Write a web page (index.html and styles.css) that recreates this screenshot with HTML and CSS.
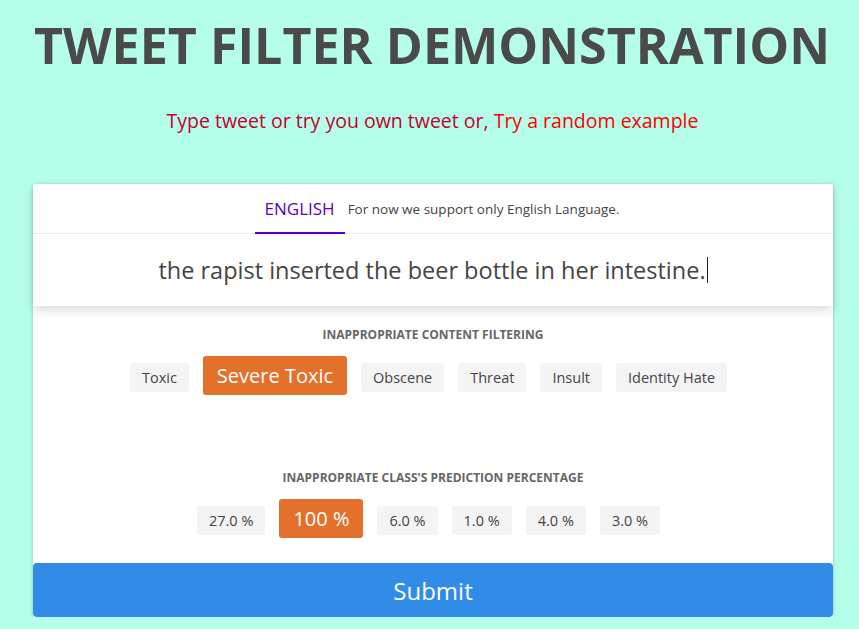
FILE: index.html
```html
<!DOCTYPE html>
<html>
<head>
<meta charset="utf-8">
<link rel="stylesheet" href="styles.css">
</head>
<body>
<h1 class="title">TWEET FILTER DEMONSTRATION</h1>
<p class="subtitle">Type tweet or try you own tweet or, <a class="random">Try a random example</a></p>
<div class="card">
  <div class="top">
    <div class="tabs">
      <span class="tab">ENGLISH</span>
      <span class="note">For now we support only English Language.</span>
    </div>
    <div class="input">the rapist inserted the beer bottle in her intestine.<span class="caret"></span></div>
  </div>
  <div class="section first">
    <div class="heading">INAPPROPRIATE CONTENT FILTERING</div>
    <div class="chips">
      <span class="chip">Toxic</span>
      <span class="chip active">Severe Toxic</span>
      <span class="chip">Obscene</span>
      <span class="chip">Threat</span>
      <span class="chip">Insult</span>
      <span class="chip">Identity Hate</span>
    </div>
  </div>
  <div class="section second">
    <div class="heading">INAPPROPRIATE CLASS'S PREDICTION PERCENTAGE</div>
    <div class="chips">
      <span class="chip">27.0 %</span>
      <span class="chip active">100 %</span>
      <span class="chip">6.0 %</span>
      <span class="chip">1.0 %</span>
      <span class="chip">4.0 %</span>
      <span class="chip">3.0 %</span>
    </div>
  </div>
  <button class="submit">Submit</button>
</div>
</body>
</html>
```
FILE: styles.css
```css
html, body {
  margin: 0;
  padding: 0;
  background: #b4feea;
  font-family: "Open Sans", "DejaVu Sans", sans-serif;
}
.title {
  margin: 14px 0 0;
  padding-left: 5px;
  text-align: center;
  font-size: 50.2px;
  line-height: 62px;
  font-weight: 700;
  color: #4a4a4a;
}
.subtitle {
  margin: 32px 0 0;
  padding-left: 6px;
  text-align: center;
  font-size: 19.5px;
  line-height: 26px;
  color: #c4002e;
}
.random {
  color: #ff0000;
}
.card {
  margin: 50px 0 0 33px;
  width: 800px;
  background: #fff;
  box-shadow: 0 1px 3px rgba(0, 0, 0, 0.25);
}
.top {
  box-shadow: 0 4px 10px rgba(0, 0, 0, 0.14);
  position: relative;
}
.tabs {
  height: 49px;
  border-bottom: 1px solid #ebebeb;
  display: flex;
  justify-content: center;
  align-items: stretch;
  padding-left: 8px;
}
.tab {
  display: flex;
  align-items: center;
  padding: 0 10px;
  font-size: 17px;
  color: #5a00c8;
  border-bottom: 2px solid #5a00c8;
  margin-bottom: -1px;
}
.note {
  display: flex;
  align-items: center;
  padding-left: 3px;
  font-size: 13.5px;
  color: #444;
}
.input {
  height: 72px;
  display: flex;
  justify-content: center;
  align-items: center;
  font-size: 23.5px;
  color: #444;
}
.caret {
  display: inline-block;
  width: 1px;
  height: 26px;
  background: #222;
  margin-left: 1px;
}
.section {
  text-align: center;
}
.first {
  padding-top: 21px;
  height: 164px;
  box-sizing: border-box;
}
.second {
  height: 93px;
}
.heading {
  font-size: 12px;
  font-weight: 700;
  color: #666;
  line-height: 16px;
}
.chips {
  margin-top: 13px;
  display: flex;
  justify-content: center;
  align-items: baseline;
  gap: 14px;
  padding-right: 9px;
}
.chip {
  background: #f4f4f4;
  border-radius: 3px;
  padding: 0 12px;
  font-size: 14.5px;
  line-height: 29px;
  color: #444;
}
.chip.active {
  background: #e3712c;
  color: #fff;
  font-size: 20px;
  line-height: 39px;
  padding: 0 14px;
}
.submit {
  display: block;
  width: 800px;
  height: 54px;
  border: 0;
  border-radius: 4px;
  background: #318ce8;
  color: #fff;
  font-family: "Open Sans", "DejaVu Sans", sans-serif;
  font-size: 24px;
}
```
